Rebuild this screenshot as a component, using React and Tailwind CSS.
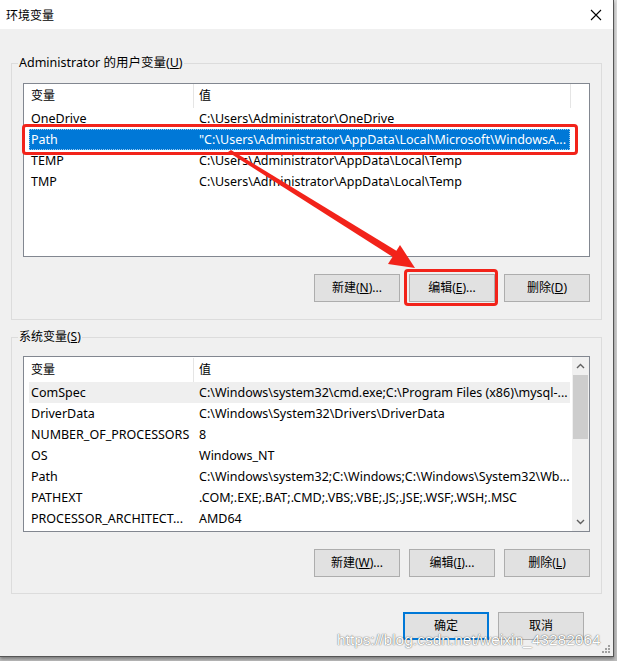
import React from "react";

const userVars = [
  ["OneDrive", "C:\\Users\\Administrator\\OneDrive"],
  ["Path", "\"C:\\Users\\Administrator\\AppData\\Local\\Microsoft\\WindowsA..."],
  ["TEMP", "C:\\Users\\Administrator\\AppData\\Local\\Temp"],
  ["TMP", "C:\\Users\\Administrator\\AppData\\Local\\Temp"],
];

const sysVars = [
  ["ComSpec", "C:\\Windows\\system32\\cmd.exe;C:\\Program Files (x86)\\mysql-..."],
  ["DriverData", "C:\\Windows\\System32\\Drivers\\DriverData"],
  ["NUMBER_OF_PROCESSORS", "8"],
  ["OS", "Windows_NT"],
  ["Path", "C:\\Windows\\system32;C:\\Windows;C:\\Windows\\System32\\Wb..."],
  ["PATHEXT", ".COM;.EXE;.BAT;.CMD;.VBS;.VBE;.JS;.JSE;.WSF;.WSH;.MSC"],
  ["PROCESSOR_ARCHITECT...", "AMD64"],
];

function Header() {
  return (
    <div className="flex h-[24px] items-center text-[#000]">
      <div className="w-[170px] h-full border-r border-[#e5e5e5] pl-[7px] flex items-center">变量</div>
      <div className="w-[377px] h-full border-r border-[#e5e5e5] pl-[5px] flex items-center">值</div>
    </div>
  );
}

function Row({ name, value, selected, hover }) {
  const bg = selected
    ? "bg-[#0078d7] text-white outline outline-1 outline-dotted outline-[#99c9ef] -outline-offset-1"
    : hover
    ? "bg-[#efefef] text-[#000]"
    : "text-[#000]";
  return (
    <div className={`ml-[5px] w-[541px] h-[21px] flex items-center whitespace-nowrap text-[12.5px] ${bg}`}>
      <div className="w-[164px] pl-[2px] overflow-hidden">{name}</div>
      <div className="flex-1 pl-[6px] overflow-hidden">{value}</div>
    </div>
  );
}

function Btn({ children, primary }) {
  return (
    <div
      className={`w-[86px] h-[28px] flex items-center justify-center bg-[#e1e1e1] text-[#000] ${
        primary ? "border-2 border-[#0078d7]" : "border border-[#adadad]"
      }`}
    >
      {children}
    </div>
  );
}

function Chevron({ down }) {
  return (
    <svg width="9" height="6" viewBox="0 0 9 6" className="block">
      <path
        d={down ? "M1 1 L4.5 4.5 L8 1" : "M1 5 L4.5 1.5 L8 5"}
        fill="none"
        stroke="#606060"
        strokeWidth="1.4"
      />
    </svg>
  );
}

export default function App() {
  return (
    <div
      className="w-[617px] h-[661px] relative overflow-hidden bg-gradient-to-b from-[#dadada] to-[#bdbdbd] text-[12px] leading-[16px]"
      style={{ fontFamily: '"Noto Sans", "Noto Sans CJK SC", sans-serif' }}
    >
      <div className="w-[614px] h-[657px] bg-[#f0f0f0] border-r border-b border-[#555] flex flex-col relative shadow-[0_2px_3px_rgba(0,0,0,0.35)]">
        {/* title bar */}
        <div className="h-[29px] bg-white flex items-center justify-between pl-[6px] pr-[10px] shrink-0">
          <span className="text-[#000]" style={{ fontFamily: '"Noto Sans CJK SC", sans-serif' }}>环境变量</span>
          <svg width="12" height="12" viewBox="0 0 12 12" className="mr-[1px]">
            <path d="M1 1 L11 11 M11 1 L1 11" stroke="#000" strokeWidth="1.1" />
          </svg>
        </div>

        {/* user variables group */}
        <div className="mt-[34px] ml-[11px] w-[591px] h-[257px] border border-[#dcdcdc] relative pt-[19px] pl-[11px] shrink-0">
          <div className="absolute -top-[9px] left-[6px] px-[1px] bg-[#f0f0f0] text-[#000] text-[12.5px]">
            Administrator 的用户变量(<span className="underline">U</span>)
          </div>
          <div className="w-[567px] h-[174px] border border-[#828790] bg-white">
            <Header />
            {userVars.map(([n, v], i) => (
              <Row key={n} name={n} value={v} selected={i === 1} />
            ))}
          </div>
          <div className="w-[567px] mt-[17px] flex justify-end gap-[9px]">
            <Btn>新建(<span className="underline">N</span>)...</Btn>
            <Btn>编辑(<span className="underline">E</span>)...</Btn>
            <Btn>删除(<span className="underline">D</span>)</Btn>
          </div>
        </div>

        {/* system variables group */}
        <div className="mt-[17px] ml-[11px] w-[591px] h-[257px] border border-[#dcdcdc] relative pt-[18px] pl-[11px] shrink-0">
          <div className="absolute -top-[9px] left-[6px] px-[1px] bg-[#f0f0f0] text-[#000]">
            系统变量(<span className="underline">S</span>)
          </div>
          <div className="w-[567px] h-[176px] border border-[#828790] bg-white flex">
            <div className="w-[548px] flex flex-col pt-[1px]">
              <div className="flex h-[24px] items-center">
                <div className="w-[170px] h-full border-r border-[#e5e5e5] pl-[7px] flex items-center">变量</div>
                <div className="flex-1 h-full pl-[5px] flex items-center">值</div>
              </div>
              {sysVars.map(([n, v], i) => (
                <Row key={n + i} name={n} value={v} hover={i === 0} />
              ))}
            </div>
            <div className="w-[17px] h-full bg-[#f0f0f0] flex flex-col items-center">
              <div className="h-[18px] flex items-center justify-center">
                <Chevron />
              </div>
              <div className="w-[15px] h-[64px] bg-[#cdcdcd]" />
              <div className="flex-1" />
              <div className="h-[18px] flex items-center justify-center">
                <Chevron down />
              </div>
            </div>
          </div>
          <div className="w-[567px] mt-[17px] flex justify-end gap-[9px]">
            <Btn>新建(<span className="underline">W</span>)...</Btn>
            <Btn>编辑(<span className="underline">I</span>)...</Btn>
            <Btn>删除(<span className="underline">L</span>)</Btn>
          </div>
        </div>

        {/* OK / Cancel */}
        <div className="mt-[18px] flex justify-end gap-[9px] pr-[29px]">
          <Btn primary>确定</Btn>
          <Btn>取消</Btn>
        </div>

        {/* annotation overlays */}
        <div className="absolute left-[22px] top-[124px] w-[556px] h-[31px] border-[3px] border-[#f2231a] rounded-[4px] pointer-events-none" />
        <div className="absolute left-[404px] top-[269px] w-[94px] h-[37px] border-[3px] border-[#f2231a] rounded-[4px] pointer-events-none" />
        <svg className="absolute left-0 top-0 pointer-events-none" width="614" height="657">
          <polygon points="228,152 231,150 400,253 396,259" fill="#f2231a" />
          <polygon points="415,268 388,264 400,245" fill="#f2231a" />
        </svg>

        {/* watermark */}
        <div
          className="absolute left-[337px] top-[631px] text-[15.5px] leading-[18px] text-white whitespace-nowrap [text-shadow:0_0_1px_rgba(0,0,0,0.7),0_0_2px_rgba(0,0,0,0.25)]"
          style={{ fontFamily: '"Liberation Sans", sans-serif' }}
        >
          https://blog.csdn.net/weixin_43282064
        </div>

        {/* resize grip */}
        <svg className="absolute right-[2px] bottom-[2px]" width="10" height="10" viewBox="0 0 10 10">
          {[
            [8, 2],
            [5, 5],
            [8, 5],
            [2, 8],
            [5, 8],
            [8, 8],
          ].map(([x, y]) => (
            <rect key={x + "-" + y} x={x - 1} y={y - 1} width="2" height="2" fill="#a0a0a0" />
          ))}
        </svg>
      </div>
    </div>
  );
}
